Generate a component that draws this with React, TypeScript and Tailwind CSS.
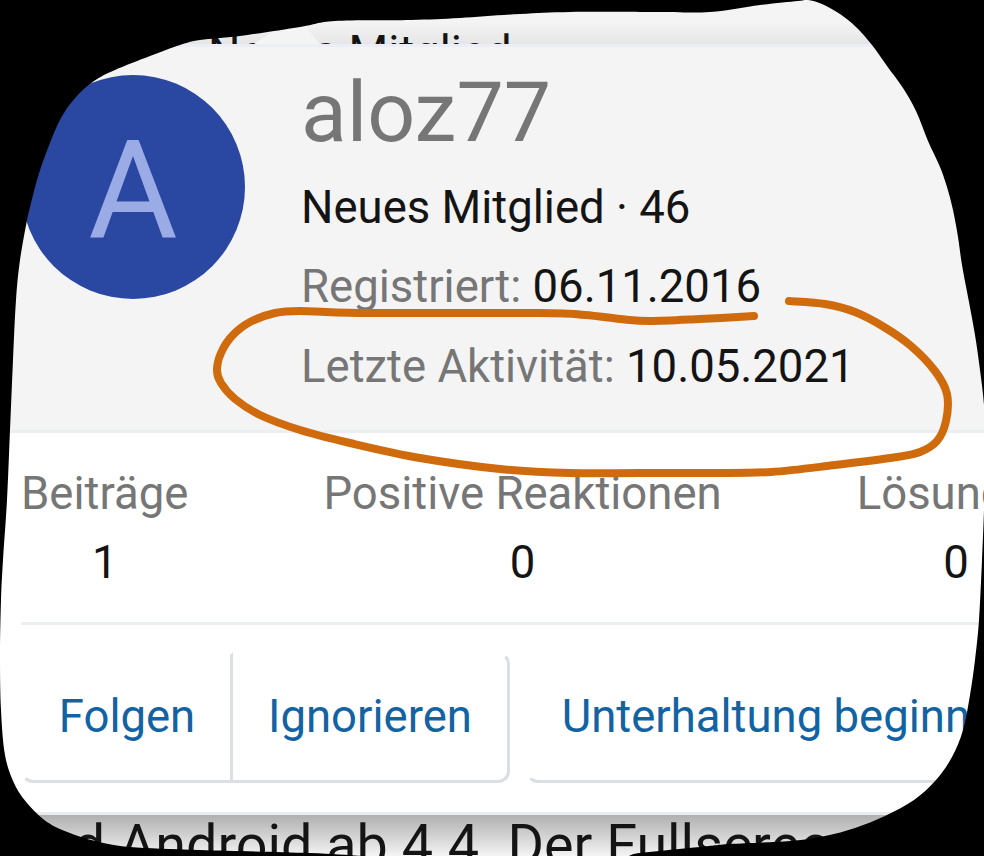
import React from 'react';
import clsx from 'clsx';

type Point = [number, number];

// Smooth freehand line through a list of points
const smoothPath = (points: Point[]): string => {
  let d = `M${points[0][0]} ${points[0][1]}`;
  for (let i = 0; i < points.length - 1; i++) {
    const p0 = points[Math.max(i - 1, 0)];
    const p1 = points[i];
    const p2 = points[i + 1];
    const p3 = points[Math.min(i + 2, points.length - 1)];
    d += ` C${p1[0] + (p2[0] - p0[0]) / 6} ${p1[1] + (p2[1] - p0[1]) / 6}`;
    d += ` ${p2[0] - (p3[0] - p1[0]) / 6} ${p2[1] - (p3[1] - p1[1]) / 6}`;
    d += ` ${p2[0]} ${p2[1]}`;
  }
  return d;
};

const outline: Point[] = [
  [27, 220], [37, 180], [48, 148], [61, 118], [76, 97], [94, 81], [115, 70], [150, 56],
  [180, 45], [200, 40], [240, 36], [300, 27], [335, 21], [410, 20], [460, 18], [520, 14],
  [570, 12], [654, 12], [710, 12], [760, 5], [798, 1], [808, 0], [822, 4], [840, 14],
  [856, 27], [872, 45], [887, 66], [903, 88], [916, 111], [928, 141], [940, 167], [947, 187],
  [953, 210], [958, 237], [962, 265], [969, 302], [975, 335], [980, 370], [984, 405], [986, 450],
  [984, 510], [982, 560], [979, 620], [975, 660], [970, 695], [963, 730], [952, 757], [936, 780],
  [914, 800], [885, 816], [855, 828], [825, 836], [790, 841], [730, 844], [700, 847], [640, 853],
  [600, 858], [400, 857], [310, 853], [200, 850], [130, 847], [95, 841], [70, 833], [47, 822],
  [27, 803], [14, 783], [5, 755], [1, 710], [0, 655], [1, 600], [3, 560], [7, 500],
  [10, 430], [13, 360], [16, 300], [20, 260], [27, 220],
];

const marker: Point[] = [
  [789, 301], [825, 304], [855, 312], [884, 327], [911, 346], [935, 371], [947, 394], [946, 421],
  [937, 441], [920, 452], [897, 457], [835, 465], [771, 472], [710, 473], [640, 473], [570, 473],
  [500, 469], [420, 458], [350, 443], [300, 430], [260, 415], [235, 399], [221, 383], [217, 370],
  [221, 353], [232, 336], [250, 322], [275, 313], [300, 311], [360, 313], [540, 313], [585, 315],
  [620, 319], [650, 321], [700, 319], [754, 316],
];

const stats = [
  { label: 'Beiträge', value: '1' },
  { label: 'Positive Reaktionen', value: '0' },
  { label: 'Lösungen', value: '0' },
];

const MemberHeader: React.FC = () => (
  <header className="flex h-[389px] shrink-0 gap-14 border-y-[3px] border-t-[#ebeef6] border-b-[#ebeff3] bg-[#f4f4f4] pl-[21px]">
    <div className="mt-7 flex size-56 shrink-0 items-center justify-center rounded-full bg-[#2a47a2] text-[137px] leading-none text-[#9aabe5]">
      <span className="mt-2">A</span>
    </div>
    <div className="pt-[18px] whitespace-nowrap text-[#141414]">
      <h1 className="mb-[7px] text-[84.2px] leading-24 text-[#767676]">aloz77</h1>
      <p className="leading-[79.3px]">Neues Mitglied · 46</p>
      <p className="leading-[79.3px]">
        <span className="text-[#767676]">Registriert:</span> 06.11.2016
      </p>
      <p className="leading-[79.3px]">
        <span className="text-[#767676]">Letzte Aktivität:</span> 10.05.2021
      </p>
    </div>
  </header>
);

const MemberStats: React.FC = () => (
  <dl className="ml-[21px] flex h-48 shrink-0 gap-[135px] border-b-[3px] border-[#eceff2] pt-[26px] text-center whitespace-nowrap">
    {stats.map((stat) => (
      <div key={stat.label} className="shrink-0">
        <dt className="leading-[69px] text-[#767676]">{stat.label}</dt>
        <dd className="leading-[69px] text-[#141414]">{stat.value}</dd>
      </div>
    ))}
  </dl>
);

const ActionButton: React.FC<{ label: string; className: string }> = ({ label, className }) => (
  <button
    className={clsx(
      'h-[131px] shrink-0 border-[3px] border-transparent border-b-[#dbdfe4] text-center whitespace-nowrap text-[#1263a3]',
      className,
    )}
  >
    {label}
  </button>
);

const MemberActions: React.FC = () => (
  <div className="flex h-[190px] shrink-0 border-b-[3px] border-[#e8ebef] pt-[27px] pl-[21px]">
    <ActionButton label="Folgen" className="w-[212px] rounded-l-xl border-r-[#dbdfe4]" />
    <ActionButton label="Ignorieren" className="w-[277px] rounded-r-xl border-l-0 border-r-[#dbdfe4]" />
    <ActionButton label="Unterhaltung beginnen" className="ml-4 w-[529px] rounded-xl border-r-[#dbdfe4]" />
  </div>
);

const App: React.FC = () => {
  return (
    <div className="relative flex h-[856px] w-[984px] flex-col overflow-hidden bg-white font-['Roboto',sans-serif] text-[45.5px]">
      <div className="h-11 shrink-0 overflow-hidden bg-linear-to-b from-[#f4f4f4] from-50% to-[#e6e6e6] pt-[27px] pl-[208px] leading-[52px] whitespace-nowrap text-[#141414]">
        Neues Mitglied
      </div>
      <MemberHeader />
      <MemberStats />
      <MemberActions />
      <div className="h-[41px] shrink-0 overflow-hidden bg-linear-to-b from-[#b0b0b0] to-[#f4f4f4] pt-0.5 text-[55.7px] leading-[56px] whitespace-nowrap text-[#141414]">
        wird Android ab 4.4. Der Fullscreen
      </div>
      <svg className="pointer-events-none absolute inset-0" width="984" height="856" viewBox="0 0 984 856" fill="none">
        <path d="M254 44 L275 30 L305 26 L320 44 Z" fill="#f4f4f4" />
        <path d={smoothPath(marker)} stroke="#d06b0d" strokeWidth="8" strokeLinecap="round" strokeLinejoin="round" />
        <path d={`M-5 -5 H990 V862 H-5 Z ${smoothPath(outline)} Z`} fill="#000" fillRule="evenodd" />
      </svg>
    </div>
  );
};

export default App;
